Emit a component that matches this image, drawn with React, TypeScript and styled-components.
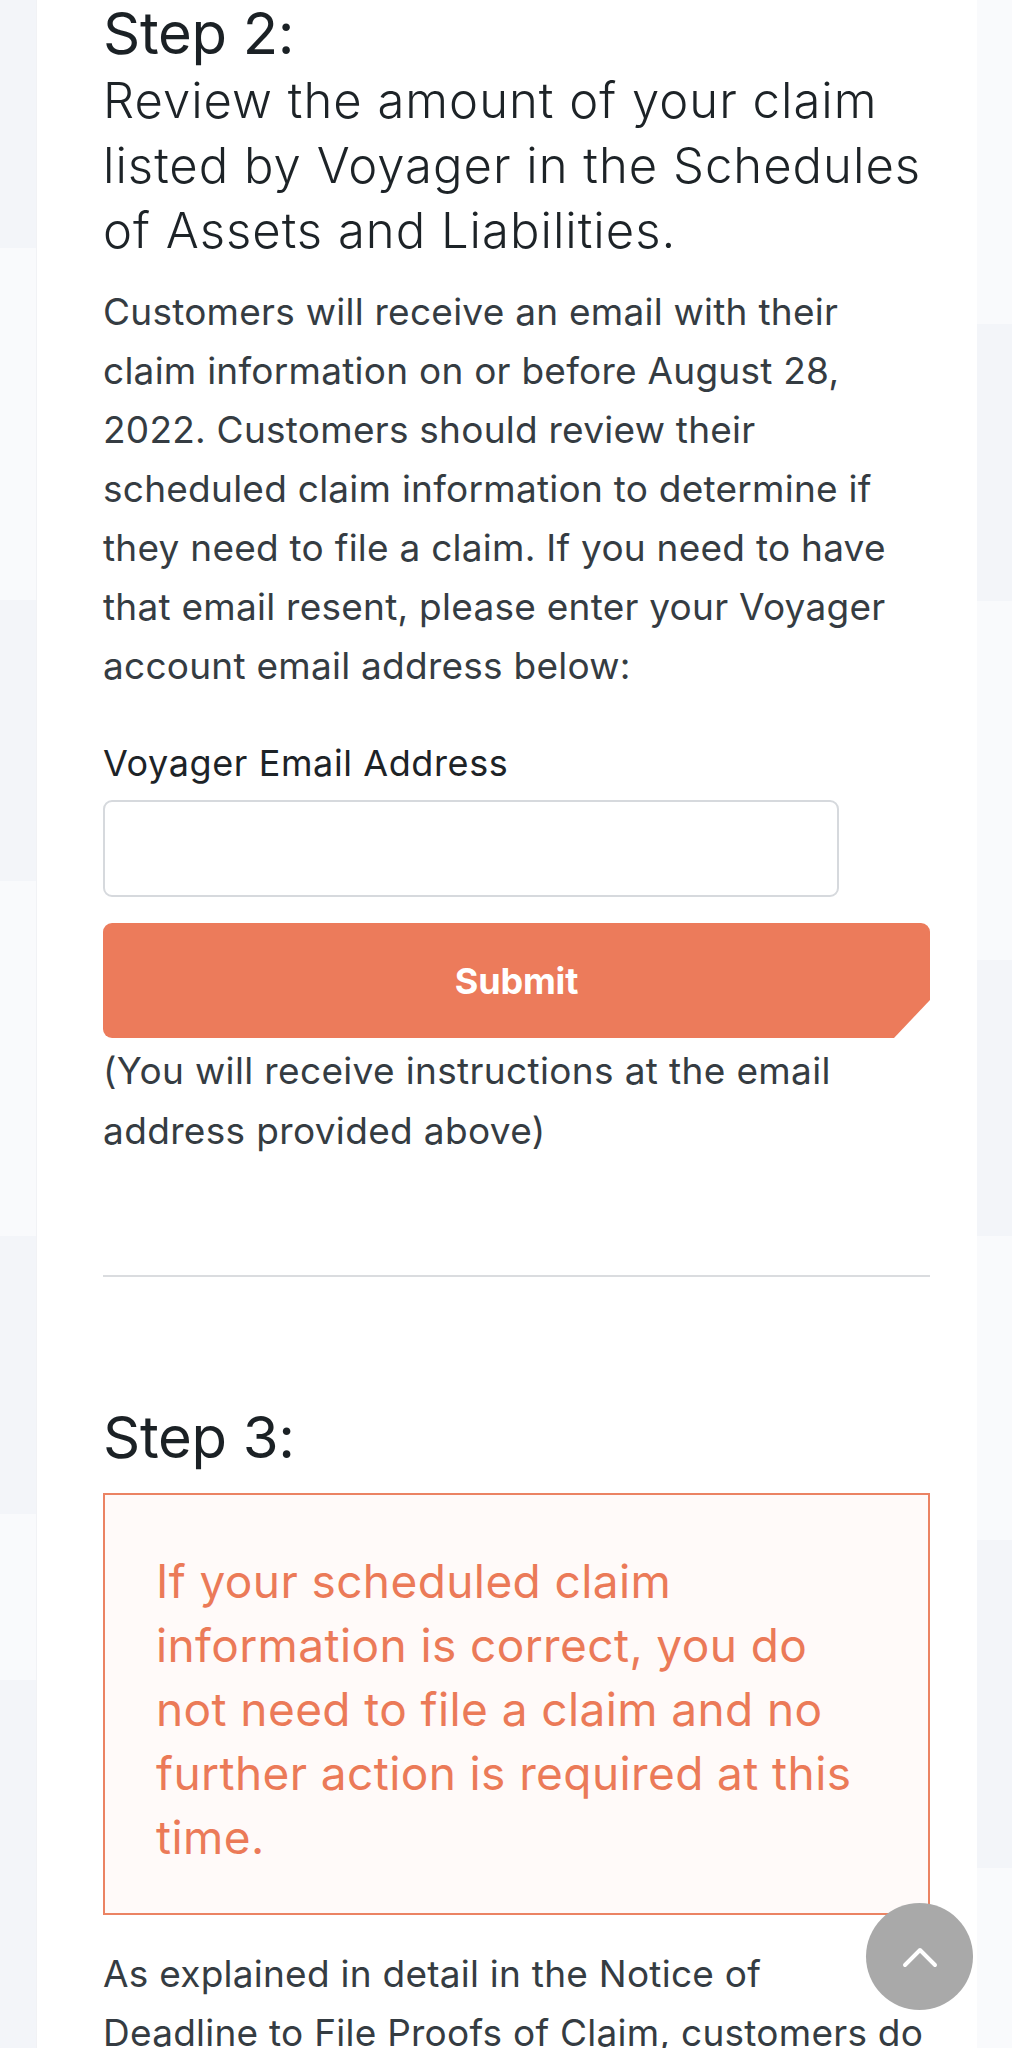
import React from "react";
import styled, { createGlobalStyle } from "styled-components";

const GlobalStyle = createGlobalStyle`
  html, body {
    margin: 0;
    padding: 0;
    background: #f9fafc;
  }
  * { box-sizing: border-box; }
`;

const DARK = "#f3f5f9";
const LIGHT = "#f9fafc";

type Band = [number, number];

const bandsToGradient = (bands: Band[]) => {
  const stops: string[] = [];
  let cursor = 0;
  bands.forEach(([a, b]) => {
    stops.push(`${LIGHT} ${cursor}px`, `${LIGHT} ${a}px`, `${DARK} ${a}px`, `${DARK} ${b}px`);
    cursor = b;
  });
  stops.push(`${LIGHT} ${cursor}px`, `${LIGHT} 100%`);
  return `linear-gradient(to bottom, ${stops.join(", ")})`;
};

const Page = styled.div`
  position: relative;
  display: flex;
  height: 2048px;
  overflow: hidden;
  font-family: Inter, "Liberation Sans", sans-serif;
`;

const Gutter = styled.div<{ $width: number; $bands: Band[] }>`
  flex: 0 0 ${(p) => p.$width}px;
  background: ${(p) => bandsToGradient(p.$bands)};
`;

const Card = styled.main`
  flex: 0 0 940px;
  background: #ffffff;
  padding: 0 47px 0 66px;
  box-shadow: -1px 0 0 #f1f2f5, 1px 0 0 #f4f5f8;
`;

const StepTitle = styled.h2<{ $top: number }>`
  margin: ${(p) => p.$top}px 0 0;
  font-size: 58px;
  font-weight: 400;
  line-height: 66px;
  color: #1b2125;
  letter-spacing: -0.3px;
`;

const StepSubtitle = styled.h3`
  margin: 2px 0 0;
  font-size: 49px;
  font-weight: 300;
  line-height: 65px;
  color: #1d2327;
  letter-spacing: 1px;
`;

const BodyText = styled.p<{ $top: number }>`
  margin: ${(p) => p.$top}px 0 0;
  font-size: 37px;
  font-weight: 400;
  line-height: 59px;
  color: #353c42;
  letter-spacing: 0.25px;
`;

const NoteText = styled(BodyText)`
  line-height: 60px;
  letter-spacing: 0.35px;
`;

const Form = styled.form`
  display: flex;
  flex-direction: column;
  margin-top: 39px;
`;

const Label = styled.label`
  font-size: 36px;
  font-weight: 400;
  line-height: 59px;
  color: #1d2327;
  letter-spacing: 0.6px;
`;

const EmailInput = styled.input`
  margin-top: 7px;
  width: 736px;
  height: 97px;
  border: 2px solid #d6d9dd;
  border-radius: 9px;
  background: #ffffff;
  font-family: inherit;
  font-size: 34px;
  padding: 0 20px;
  outline: none;
`;

const SubmitButton = styled.button`
  margin-top: 26px;
  width: 100%;
  height: 115px;
  border: none;
  border-radius: 9px;
  background: #ec7b5b;
  color: #ffffff;
  font-family: Inter, "Liberation Sans", sans-serif;
  font-size: 36px;
  font-weight: 700;
  letter-spacing: -0.2px;
  clip-path: polygon(0 0, 100% 0, 100% calc(100% - 38px), calc(100% - 36px) 100%, 0 100%);
  cursor: pointer;
`;

const Rule = styled.hr`
  margin: 114px 0 0;
  border: none;
  height: 2px;
  background: #dadcdf;
`;

const Callout = styled.div`
  margin-top: 23px;
  border: 2px solid #eb8363;
  background: #fffaf9;
  padding: 54px 60px 44px 51px;
`;

const CalloutText = styled.p`
  margin: 0;
  font-size: 46px;
  font-weight: 400;
  line-height: 64px;
  color: #eb7a58;
  letter-spacing: 0.4px;
`;

const ScrollTop = styled.button`
  position: absolute;
  left: 866px;
  top: 1903px;
  width: 107px;
  height: 107px;
  border-radius: 50%;
  border: none;
  background: #a9a9a9;
  display: flex;
  align-items: center;
  justify-content: center;
  padding: 0;
  cursor: pointer;
`;

export default function App() {
  return (
    <>
      <GlobalStyle />
      <Page>
        <Gutter $width={37} $bands={[[0, 248], [600, 881], [1236, 1514], [1680, 2048]]} />
        <Card>
          <StepTitle $top={0}>Step 2:</StepTitle>
          <StepSubtitle>
            Review the amount of your claim listed by Voyager in the Schedules of Assets and Liabilities.
          </StepSubtitle>
          <BodyText $top={19}>
            Customers will receive an email with their claim information on or before August 28, 2022.
            Customers should review their scheduled claim information to determine if they need to file a
            claim. If you need to have that email resent, please enter your Voyager account email address
            below:
          </BodyText>
          <Form onSubmit={(e) => e.preventDefault()}>
            <Label htmlFor="voyager-email">Voyager Email Address</Label>
            <EmailInput id="voyager-email" type="email" />
            <SubmitButton type="submit">Submit</SubmitButton>
          </Form>
          <NoteText $top={3}>(You will receive instructions at the email address provided above)</NoteText>
          <Rule />
          <StepTitle $top={127}>Step 3:</StepTitle>
          <Callout>
            <CalloutText>
              If your scheduled claim information is correct, you do not need to file a claim and no further
              action is required at this time.
            </CalloutText>
          </Callout>
          <BodyText $top={29}>
            As explained in detail in the Notice of
            <br />
            Deadline to File Proofs of Claim, customers do not need to file a proof of claim if their
            scheduled claim is correct.
          </BodyText>
        </Card>
        <Gutter $width={35} $bands={[[324, 601], [960, 1236], [1540, 1868]]} />
        <ScrollTop aria-label="Scroll to top">
          <svg width="36" height="22" viewBox="0 0 36 22" fill="none">
            <polyline
              points="3,19 18,4 33,19"
              stroke="#ffffff"
              strokeWidth="4"
              strokeLinecap="round"
              strokeLinejoin="round"
            />
          </svg>
        </ScrollTop>
      </Page>
    </>
  );
}
